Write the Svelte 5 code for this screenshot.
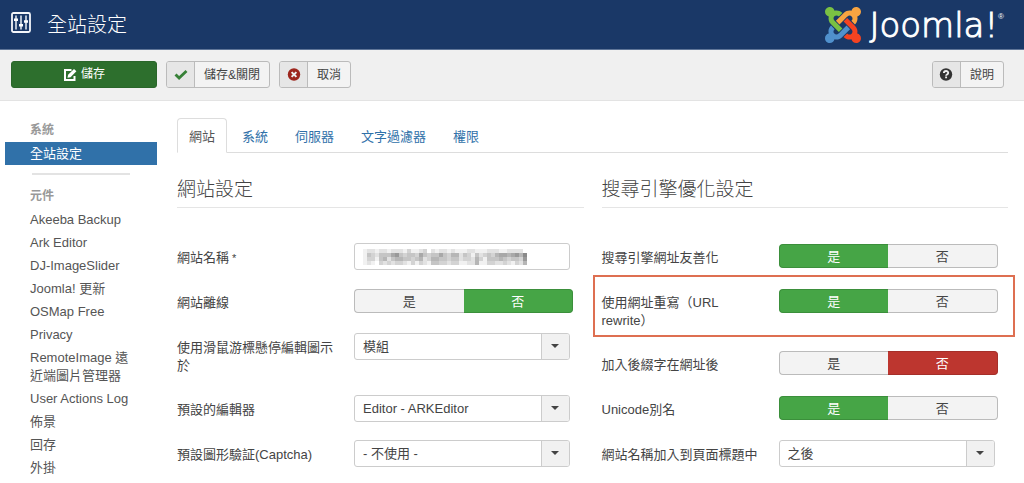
<script>
  const groups = [
    { title: '系統', items: ['全站設定'], active: true },
    {
      title: '元件',
      items: ['Akeeba Backup', 'Ark Editor', 'DJ-ImageSlider', 'Joomla! 更新', 'OSMap Free', 'Privacy', 'RemoteImage 遠近端圖片管理器', 'User Actions Log', '佈景', '回存', '外掛']
    }
  ];
  const tabs = ['網站', '系統', '伺服器', '文字過濾器', '權限'];
  let activeTab = $state('網站');

  let sections = $state([
    {
      title: '網站設定',
      rows: [
        { id: 'sitename', label: '網站名稱', required: true, type: 'text' },
        { id: 'offline', label: '網站離線', type: 'toggle', value: '否', tone: 'good' },
        { id: 'frontediting', label: '使用滑鼠游標懸停編輯圖示於', type: 'select', options: ['模組'], value: '模組' },
        { id: 'editor', label: '預設的編輯器', type: 'select', options: ['Editor - ARKEditor'], value: 'Editor - ARKEditor' },
        { id: 'captcha', label: '預設圖形驗証(Captcha)', type: 'select', options: ['- 不使用 -'], value: '- 不使用 -' }
      ]
    },
    {
      title: '搜尋引擎優化設定',
      rows: [
        { id: 'sef', label: '搜尋引擎網址友善化', type: 'toggle', value: '是', tone: 'good' },
        { id: 'rewrite', label: '使用網址重寫（URL rewrite）', type: 'toggle', value: '是', tone: 'good', marked: true },
        { id: 'suffix', label: '加入後綴字在網址後', type: 'toggle', value: '否', tone: 'bad' },
        { id: 'unicode', label: 'Unicode別名', type: 'toggle', value: '是', tone: 'good' },
        { id: 'titles', label: '網站名稱加入到頁面標題中', type: 'select', options: ['之後'], value: '之後' }
      ]
    }
  ]);

  // Grey levels of the obscured site name, one digit per 4px cell (0 = clear, 9 = darkest)
  const mosaic = [
    '12212212221311230212212111221112221122220',
    '14324446743443643446435524314234356656758',
    '13314524554434523554434423325314445434437',
    '12103232332131321443323311225113322321325'
  ];
  const cells = mosaic.flatMap((line, y) => [...line].map((d, x) => ({ x, y, d: Number(d) })));
  const arm = 'M16.719 14.759L14.22 17.26l-2.37 2.37-.462.466c-1.368 1.365-3.297 1.83-5.047 1.397-.327 1.424-1.604 2.49-3.13 2.49C1.438 23.983 0 22.547 0 20.772c0-1.518 1.055-2.789 2.469-3.123-.446-1.76.016-3.705 1.396-5.08l.179-.18 2.37 2.37-.184.181c-.769.779-.769 2.024 0 2.789.771.78 2.022.78 2.787 0l.465-.465 2.367-2.371 2.502-2.506z';
</script>

<header class="header">
  <h1>
    <svg class="equalizer" viewBox="0 0 20 21" aria-hidden="true">
      <rect x="1" y="1" width="18" height="19" rx="1.5" fill="none" stroke="#f4f6fa" stroke-width="1.8" />
      <path d="M5 3.5v14M10 3.5v14M15 3.5v14" stroke="#e8edf5" stroke-width="1.5" />
      <path d="M3 7.800h4M8 13.200h4M13 9.500h4" stroke="#fff" stroke-width="2.6" />
    </svg>
    全站設定
  </h1>
  <a class="logo" href="#home" aria-label="Joomla!">
    <svg viewBox="0 0 24 24" aria-hidden="true">
      <path d={arm} fill="#5091cd" />
      <path d={arm} fill="#7ac143" transform="rotate(90 12 12)" />
      <path d={arm} fill="#f9a541" transform="rotate(180 12 12)" />
      <path d={arm} fill="#f44321" transform="rotate(270 12 12)" />
    </svg>
    <span class="word">Joomla!</span><span class="reg">®</span>
  </a>
</header>

<div class="toolbar">
  <button class="btn save">
    <svg viewBox="0 0 14 14" aria-hidden="true">
      <path d="M8.5 2H2v10h9.5V8" fill="none" stroke="#fff" stroke-width="2" />
      <path d="M4.5 9.8l.6-3L11 1l2.4 2.3-5.9 5.9z" fill="#fff" />
    </svg>
    <span>儲存</span>
  </button>
  <button class="btn split">
    <span class="icon"><svg viewBox="0 0 14 14" aria-hidden="true"><path d="M1.500 6.500l3.600 3.600 7.400-7" fill="none" stroke="#378137" stroke-width="2.8" /></svg></span>
    <span class="text">儲存&amp;關閉</span>
  </button>
  <button class="btn split">
    <span class="icon"><svg viewBox="0 0 14 14" aria-hidden="true"><circle cx="7" cy="6.500" r="6.2" fill="#9d261d" /><path d="M4.6 4.100l4.800 4.800M9.400 4.100L4.600 8.900" stroke="#eee" stroke-width="2" /></svg></span>
    <span class="text">取消</span>
  </button>
  <button class="btn split help">
    <span class="icon"><svg viewBox="0 0 14 14" aria-hidden="true"><circle cx="7" cy="6.500" r="6.2" fill="#333" /><path d="M4.900 5.100c0-2.800 4.300-2.700 4.300-.2C9.200 6.500 7.100 6.400 7.100 7.700M7.100 8.600v1.700" fill="none" stroke="#eee" stroke-width="1.900" /></svg></span>
    <span class="text">說明</span>
  </button>
</div>

<div class="page">
  <nav class="sidebar">
    {#each groups as group}
      <h2>{group.title}</h2>
      <ul class:divided={group.active}>
        {#each group.items as item}
          <li><a class:active={group.active} href="#{item}">{item}</a></li>
        {/each}
      </ul>
    {/each}
  </nav>

  <main>
    <div class="tabs" role="tablist">
      {#each tabs as tab}
        <button role="tab" aria-selected={activeTab === tab} class:current={activeTab === tab} onclick={() => (activeTab = tab)}>{tab}</button>
      {/each}
    </div>

    <form class="columns">
      {#each sections as section}
        <section>
          <h2>{section.title}</h2>
          {#each section.rows as row}
            {#if row.type === 'toggle'}
              <div class="row" class:marked={row.marked} role="radiogroup" aria-labelledby="{row.id}-label">
                <span class="label" id="{row.id}-label">{row.label}</span>
                <div class="toggle {row.tone}">
                  {#each ['是', '否'] as option}
                    <label>
                      <input type="radio" name={row.id} value={option} bind:group={row.value} />
                      <span>{option}</span>
                    </label>
                  {/each}
                </div>
              </div>
            {:else}
              <div class="row">
                <label class="label" for={row.id}>{row.label}{#if row.required}<span class="star">&nbsp;*</span>{/if}</label>
                <div class="field">
                  {#if row.type === 'text'}
                    <input id={row.id} type="text" />
                    <svg class="mosaic" viewBox="0 0 164 16" aria-hidden="true" shape-rendering="crispEdges">
                      {#each cells as c}
                        <rect x={c.x * 4} y={c.y * 4} width="4" height="4" fill="#333" fill-opacity={c.d / 14} />
                      {/each}
                    </svg>
                  {:else}
                    <select id={row.id} bind:value={row.value}>
                      {#each row.options as option}<option>{option}</option>{/each}
                    </select>
                    <span class="arrow"></span>
                  {/if}
                </div>
              </div>
            {/if}
          {/each}
        </section>
      {/each}
    </form>
  </main>
</div>

<style>
  :global(body) {
    margin: 0;
    background: #fff;
    color: #444;
    font: 13px/18px 'Liberation Sans', 'Noto Sans CJK TC', sans-serif;
  }
  * { box-sizing: border-box; }
  button, input, select { font: inherit; color: inherit; }
  h1, h2, ul { margin: 0; padding: 0; }
  h1, h2 { font-weight: 300; }

  .header {
    display: flex;
    align-items: center;
    justify-content: space-between;
    height: 50px;
    padding: 0 20px 0 11px;
    background: #1a3867;
    border-bottom: 1px solid #5f7598;
    color: #fff;
  }
  h1 { display: flex; align-items: center; gap: 16px; font-size: 20px; line-height: 30px; }
  .equalizer { width: 20px; height: 21px; margin-bottom: 5px; }
  .logo { display: flex; align-items: center; color: #fff; text-decoration: none; }
  .logo svg { width: 36px; height: 36px; margin-right: 8px; }
  .word { font: 200 34px/40px 'DejaVu Sans', sans-serif; -webkit-text-stroke: 1px #fff; }
  .reg { align-self: flex-start; font-size: 8px; line-height: 24px; }

  .toolbar {
    display: flex;
    gap: 9px;
    height: 51px;
    padding: 11px 20px 0 11px;
    background: #f0f0f0;
    border-bottom: 1px solid #e3e3e3;
  }
  .btn {
    display: flex;
    height: 27px;
    padding: 0;
    border: 1px solid #bbb;
    border-radius: 3px;
    background: #f3f3f3;
    line-height: 27px;
    font-size: 12px;
    overflow: hidden;
  }
  .btn svg { width: 14px; height: 14px; }
  .save {
    width: 146px;
    align-items: center;
    justify-content: center;
    gap: 4px;
    background: #2d6f2d;
    border-color: #2a662a;
    color: #fff;
  }
  .icon {
    display: flex;
    align-items: center;
    justify-content: center;
    width: 28px;
    height: 25px;
    background: #e6e6e6;
    border-right: 1px solid #bbb;
  }
  .text { padding: 0 9px; }
  .help { margin-left: auto; }

  .page { display: flex; }
  .sidebar { flex: none; width: 157px; padding: 18px 0 0 5px; color: #555; }
  .sidebar h2 { padding: 2px 25px 3px; font-size: 12px; font-weight: 700; line-height: 18px; color: #999; }
  .sidebar ul { list-style: none; }
  .sidebar a { display: block; padding: 3px 25px 2px; color: inherit; text-decoration: none; }
  .sidebar a.active { background: #3071a9; color: #fff; }
  .divided::after { content: ''; display: block; height: 2px; margin: 8px 27px 10px; background: #e3e3e3; }

  main { flex: 1; min-width: 0; padding: 17px 16px 0 20px; }
  .tabs { display: flex; gap: 3px; border-bottom: 1px solid #ddd; }
  .tabs button {
    height: 35px;
    margin-bottom: -1px;
    padding: 2px 11px 0;
    border: 1px solid transparent;
    border-radius: 4px 4px 0 0;
    background: none;
    color: #3071a9;
  }
  .tabs .current { background: #fff; border-color: #ddd #ddd #fff; color: #555; }

  .columns { display: grid; grid-template-columns: 1fr 1fr; gap: 18px; padding-top: 18px; }
  section h2 { height: 37px; margin-bottom: 35px; border-bottom: 1px solid #e5e5e5; font-size: 19px; line-height: 38px; }
  .row { position: relative; display: flex; min-height: 27px; margin-bottom: 18px; }
  .label { flex: none; width: 177px; padding: 6px 20px 2px 0; }
  .star { font-size: 11px; }
  .marked::after {
    content: '';
    position: absolute;
    inset: -13px -7px -5px -9px;
    border: 2px solid #de6f51;
    pointer-events: none;
  }

  .field { position: relative; flex: 1; max-width: 216px; height: 27px; }
  .field input, select {
    width: 100%;
    height: 27px;
    padding: 0 8px;
    border: 1px solid #ccc;
    border-radius: 3px;
    background: #fff;
    appearance: none;
    display: block;
  }
  .mosaic { position: absolute; left: 9px; top: 6px; width: 164px; height: 16px; pointer-events: none; }
  .arrow {
    position: absolute;
    top: 1px;
    right: 1px;
    bottom: 1px;
    width: 28px;
    background: #f1f1f1;
    border-left: 1px solid #ccc;
    border-radius: 0 2px 2px 0;
    pointer-events: none;
  }
  .arrow::after {
    content: '';
    position: absolute;
    left: 9px;
    top: 10px;
    border: 4px solid transparent;
    border-top-color: #444;
    border-bottom: 0;
  }

  .toggle { display: grid; grid-template-columns: 1fr 1fr; flex: 1; max-width: 219px; height: 24px; margin-top: 1px; }
  .toggle label { position: relative; display: block; }
  .toggle input { position: absolute; inset: 0; margin: 0; opacity: 0; }
  .toggle span {
    display: block;
    height: 24px;
    border: 1px solid #bbb;
    border-radius: 0 4px 4px 0;
    background: #f3f3f3;
    line-height: 24px;
    text-align: center;
  }
  .toggle label:first-child span { border-right: 0; border-radius: 4px 0 0 4px; }
  .toggle label:last-child span { border-left: 0; }
  .good input:checked + span { background: #46a546; border-color: #3b8f3b; color: #fff; }
  .bad input:checked + span { background: #bd362f; border-color: #a52f29; color: #fff; }
</style>
